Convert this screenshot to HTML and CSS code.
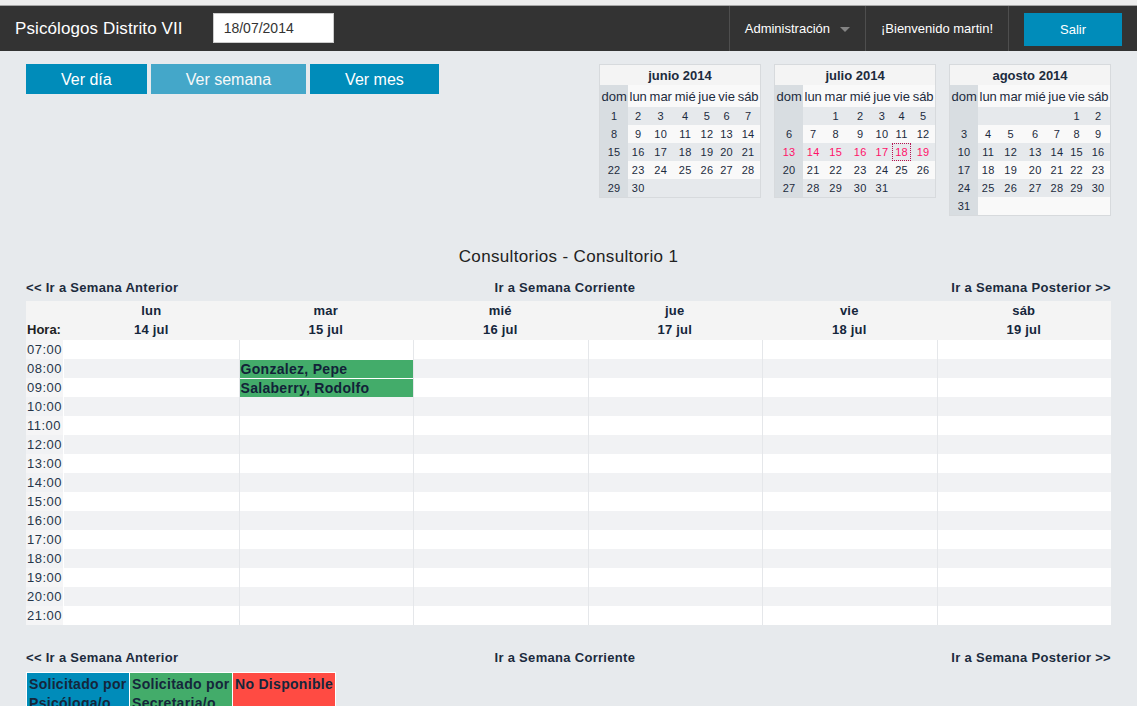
FILE: index.html
```html
<!DOCTYPE html>
<html lang="es">
<head>
<meta charset="utf-8">
<title>Psicólogos Distrito VII</title>
<link rel="stylesheet" href="styles.css">
</head>
<body>
<div class="topstrip"></div>
<nav class="topbar">
  <div class="tb-left">
    <h1 class="brand">Psicólogos Distrito VII</h1>
    <input class="date-input" type="text" value="18/07/2014">
  </div>
  <ul class="tb-right">
    <li class="tb-item has-dropdown">Administración<span class="caret"></span></li>
    <li class="tb-item">¡Bienvenido martin!</li>
    <li class="tb-item tb-btn"><a class="btn-salir">Salir</a></li>
  </ul>
</nav>
<main class="main">
  <div class="toolbar">
    <div class="view-btns">
      <a class="vbtn">Ver día</a>
      <a class="vbtn active">Ver semana</a>
      <a class="vbtn">Ver mes</a>
    </div>
    <div class="minicals">
      <table class="mcal">
        <thead>
          <tr><th colspan="7" class="mtitle">junio 2014</th></tr>
          <tr class="dn"><td class="dom">dom</td><td>lun</td><td>mar</td><td>mié</td><td>jue</td><td>vie</td><td>sáb</td></tr>
        </thead>
        <tbody>
          <tr class="g"><td class="dom">1</td><td>2</td><td>3</td><td>4</td><td>5</td><td>6</td><td>7</td></tr>
          <tr class="w"><td class="dom">8</td><td>9</td><td>10</td><td>11</td><td>12</td><td>13</td><td>14</td></tr>
          <tr class="g"><td class="dom">15</td><td>16</td><td>17</td><td>18</td><td>19</td><td>20</td><td>21</td></tr>
          <tr class="w"><td class="dom">22</td><td>23</td><td>24</td><td>25</td><td>26</td><td>27</td><td>28</td></tr>
          <tr class="g"><td class="dom">29</td><td>30</td><td></td><td></td><td></td><td></td><td></td></tr>
        </tbody>
      </table>
      <table class="mcal">
        <thead>
          <tr><th colspan="7" class="mtitle">julio 2014</th></tr>
          <tr class="dn"><td class="dom">dom</td><td>lun</td><td>mar</td><td>mié</td><td>jue</td><td>vie</td><td>sáb</td></tr>
        </thead>
        <tbody>
          <tr class="g"><td class="dom"></td><td></td><td>1</td><td>2</td><td>3</td><td>4</td><td>5</td></tr>
          <tr class="w"><td class="dom">6</td><td>7</td><td>8</td><td>9</td><td>10</td><td>11</td><td>12</td></tr>
          <tr class="g sel"><td class="dom">13</td><td>14</td><td>15</td><td>16</td><td>17</td><td class="today">18</td><td>19</td></tr>
          <tr class="w"><td class="dom">20</td><td>21</td><td>22</td><td>23</td><td>24</td><td>25</td><td>26</td></tr>
          <tr class="g"><td class="dom">27</td><td>28</td><td>29</td><td>30</td><td>31</td><td></td><td></td></tr>
        </tbody>
      </table>
      <table class="mcal">
        <thead>
          <tr><th colspan="7" class="mtitle">agosto 2014</th></tr>
          <tr class="dn"><td class="dom">dom</td><td>lun</td><td>mar</td><td>mié</td><td>jue</td><td>vie</td><td>sáb</td></tr>
        </thead>
        <tbody>
          <tr class="g"><td class="dom"></td><td></td><td></td><td></td><td></td><td>1</td><td>2</td></tr>
          <tr class="w"><td class="dom">3</td><td>4</td><td>5</td><td>6</td><td>7</td><td>8</td><td>9</td></tr>
          <tr class="g"><td class="dom">10</td><td>11</td><td>12</td><td>13</td><td>14</td><td>15</td><td>16</td></tr>
          <tr class="w"><td class="dom">17</td><td>18</td><td>19</td><td>20</td><td>21</td><td>22</td><td>23</td></tr>
          <tr class="g"><td class="dom">24</td><td>25</td><td>26</td><td>27</td><td>28</td><td>29</td><td>30</td></tr>
          <tr class="w"><td class="dom">31</td><td></td><td></td><td></td><td></td><td></td><td></td></tr>
        </tbody>
      </table>
    </div>
  </div>

  <h2 class="cal-title">Consultorios - Consultorio 1</h2>

  <div class="week-nav top">
    <a>&lt;&lt; Ir a Semana Anterior</a>
    <a>Ir a Semana Corriente</a>
    <a>Ir a Semana Posterior &gt;&gt;</a>
  </div>

  <table class="week">
    <colgroup><col class="c-hr"><col><col><col><col><col><col></colgroup>
    <thead>
      <tr>
        <th class="hr-h">Hora:</th>
        <th>lun<br>14 jul</th>
        <th>mar<br>15 jul</th>
        <th>mié<br>16 jul</th>
        <th>jue<br>17 jul</th>
        <th>vie<br>18 jul</th>
        <th>sáb<br>19 jul</th>
      </tr>
    </thead>
    <tbody>
      <tr><th class="hr">07:00</th><td></td><td></td><td></td><td></td><td></td><td></td></tr>
      <tr><th class="hr">08:00</th><td></td><td class="ev">Gonzalez, Pepe</td><td></td><td></td><td></td><td></td></tr>
      <tr><th class="hr">09:00</th><td></td><td class="ev">Salaberry, Rodolfo</td><td></td><td></td><td></td><td></td></tr>
      <tr><th class="hr">10:00</th><td></td><td></td><td></td><td></td><td></td><td></td></tr>
      <tr><th class="hr">11:00</th><td></td><td></td><td></td><td></td><td></td><td></td></tr>
      <tr><th class="hr">12:00</th><td></td><td></td><td></td><td></td><td></td><td></td></tr>
      <tr><th class="hr">13:00</th><td></td><td></td><td></td><td></td><td></td><td></td></tr>
      <tr><th class="hr">14:00</th><td></td><td></td><td></td><td></td><td></td><td></td></tr>
      <tr><th class="hr">15:00</th><td></td><td></td><td></td><td></td><td></td><td></td></tr>
      <tr><th class="hr">16:00</th><td></td><td></td><td></td><td></td><td></td><td></td></tr>
      <tr><th class="hr">17:00</th><td></td><td></td><td></td><td></td><td></td><td></td></tr>
      <tr><th class="hr">18:00</th><td></td><td></td><td></td><td></td><td></td><td></td></tr>
      <tr><th class="hr">19:00</th><td></td><td></td><td></td><td></td><td></td><td></td></tr>
      <tr><th class="hr">20:00</th><td></td><td></td><td></td><td></td><td></td><td></td></tr>
      <tr><th class="hr">21:00</th><td></td><td></td><td></td><td></td><td></td><td></td></tr>
    </tbody>
  </table>

  <div class="week-nav bottom">
    <a>&lt;&lt; Ir a Semana Anterior</a>
    <a>Ir a Semana Corriente</a>
    <a>Ir a Semana Posterior &gt;&gt;</a>
  </div>

  <div class="legend">
    <div class="lg lg-blue">Solicitado por Psicóloga/o</div>
    <div class="lg lg-green">Solicitado por Secretaria/o</div>
    <div class="lg lg-red">No Disponible</div>
  </div>
</main>
</body>
</html>
```

FILE: styles.css
```css
html {
  scrollbar-width: none;
}

body {
  margin: 0;
  background: #e7eaed;
  font-family: "Liberation Sans", Arial, sans-serif;
  color: #1c2b3d;
}

/* ---------- top strip & bar ---------- */
.topstrip {
  height: 5px;
  background: #ececec;
  border-bottom: 1px solid #a6a6a6;
}

.topbar {
  display: flex;
  justify-content: space-between;
  height: 45px;
  background: #333333;
  color: #fff;
}

.tb-left {
  display: flex;
  align-items: flex-start;
}

.brand {
  margin: 0;
  padding: 0 15px;
  font-size: 17px;
  font-weight: normal;
  letter-spacing: 0.1px;
  line-height: 45px;
  color: #fff;
}

.date-input {
  box-sizing: border-box;
  margin: 7px 0 0 15px;
  width: 121px;
  height: 30px;
  padding: 0 10px;
  border: 1px solid #cccccc;
  background: #fff;
  font-family: "Liberation Sans", Arial, sans-serif;
  font-size: 14px;
  color: #333;
  outline: none;
}

.tb-right {
  display: flex;
  margin: 0;
  padding: 0;
  list-style: none;
}

.tb-item {
  position: relative;
  padding: 0 15px;
  border-left: 1px solid #4e4e4e;
  font-size: 13px;
  line-height: 45px;
  color: #fff;
}

.has-dropdown {
  padding-right: 35px;
}

.caret {
  position: absolute;
  right: 15px;
  top: 50%;
  margin-top: -2px;
  width: 0;
  height: 0;
  border-left: 5px solid transparent;
  border-right: 5px solid transparent;
  border-top: 5px solid rgba(255, 255, 255, 0.4);
}

.btn-salir {
  display: block;
  margin-top: 7px;
  width: 98px;
  height: 33px;
  line-height: 33px;
  background: #008cba;
  color: #fff;
  text-align: center;
  font-size: 13px;
}

/* ---------- main ---------- */
.main {
  padding: 13px 26px 0;
}

.toolbar {
  display: flex;
  justify-content: space-between;
  align-items: flex-start;
}

.view-btns {
  display: flex;
  gap: 4px;
}

.vbtn {
  display: block;
  height: 30px;
  line-height: 31px;
  padding: 0 35px;
  background: #008cba;
  color: #fff;
  font-size: 16px;
}

.vbtn.active {
  opacity: 0.7;
}

/* ---------- mini calendars ---------- */
.minicals {
  display: flex;
  gap: 13px;
  align-items: flex-start;
}

.mcal {
  width: 162px;
  border-collapse: collapse;
  border: 1px solid #d7dadd;
  color: #1c2b3d;
}

.mcal td,
.mcal th {
  padding: 0;
  text-align: center;
}

.mtitle {
  height: 20px;
  background: #f4f4f4;
  font-size: 13px;
  font-weight: bold;
}

.mcal .dn td {
  height: 22px;
  padding: 0 1px;
  background: #f9f9f9;
  font-size: 13px;
}

.mcal tbody td {
  height: 18px;
  font-size: 11px;
  letter-spacing: 0.3px;
}

.mcal tr.g td {
  background: #e6e9ec;
}

.mcal tr.w td {
  background: #f9f9f9;
}

.mcal tr td.dom {
  background: #d8dde1;
}

.mcal tr.sel td {
  color: #ff1169;
}

.mcal td.today {
  outline: 1px dotted #b3124f;
  outline-offset: -1px;
}

/* ---------- week view ---------- */
.cal-title {
  margin: 31px 0 0;
  font-size: 17px;
  font-weight: normal;
  line-height: 20px;
  letter-spacing: 0.35px;
  text-align: center;
  color: #222;
}

.week-nav {
  display: flex;
  justify-content: space-between;
  font-size: 13px;
  font-weight: bold;
  letter-spacing: 0.3px;
  line-height: 16px;
  color: #1c2b3d;
}

.week-nav.top {
  margin: 13px 0 5px;
}

.week-nav.bottom {
  margin: 25px 0 6px;
}

.week {
  width: 100%;
  table-layout: fixed;
  border-collapse: separate;
  border-spacing: 0;
  background: #fff;
}

.week col.c-hr {
  width: 38px;
}

.week thead th {
  height: 38px;
  padding: 0 0 1px;
  background: #f4f4f4;
  font-size: 13px;
  font-weight: bold;
  letter-spacing: 0.2px;
  line-height: 19px;
  vertical-align: bottom;
  color: #15263b;
}

.week thead th.hr-h {
  text-align: left;
  padding-left: 1px;
  color: #222;
  letter-spacing: 0;
}

.week tbody th.hr {
  box-sizing: border-box;
  height: 19px;
  padding: 0 0 0 1px;
  background: #f5f5f6;
  border-right: 1px solid #fff;
  text-align: left;
  font-size: 13px;
  font-weight: normal;
  letter-spacing: 0.5px;
  line-height: 19px;
  color: #26364a;
}

.week tbody td {
  height: 19px;
  padding: 0;
  border-left: 1px solid #e5e7ea;
}

.week tbody tr:nth-child(odd) td {
  background: #fff;
}

.week tbody tr:nth-child(even) td {
  background: #f1f2f4;
}

.week tbody tr:nth-child(even) th.hr {
  background: #f1f2f4;
}

.week tbody td:nth-of-type(1) {
  border-left: none;
}

.week tbody tr td.ev {
  height: 18px;
  padding: 1px 0 0 1px;
  background: #43ac6a;
  box-shadow: inset 0 1px 0 #fff;
  font-size: 14px;
  font-weight: bold;
  letter-spacing: 0.3px;
  line-height: 18px;
  color: #122238;
  white-space: nowrap;
  overflow: hidden;
}

/* ---------- legend ---------- */
.legend {
  display: flex;
  gap: 1px;
  width: fit-content;
  padding: 1px;
  background: #fff;
}

.lg {
  width: 100px;
  height: 40px;
  padding: 2px 0 0 2px;
  font-size: 14px;
  font-weight: bold;
  letter-spacing: 0.3px;
  line-height: 19px;
  color: #15263b;
}

.lg-blue {
  background: #008cba;
}

.lg-green {
  background: #43ac6a;
}

.lg-red {
  background: #ff4b43;
}
```
